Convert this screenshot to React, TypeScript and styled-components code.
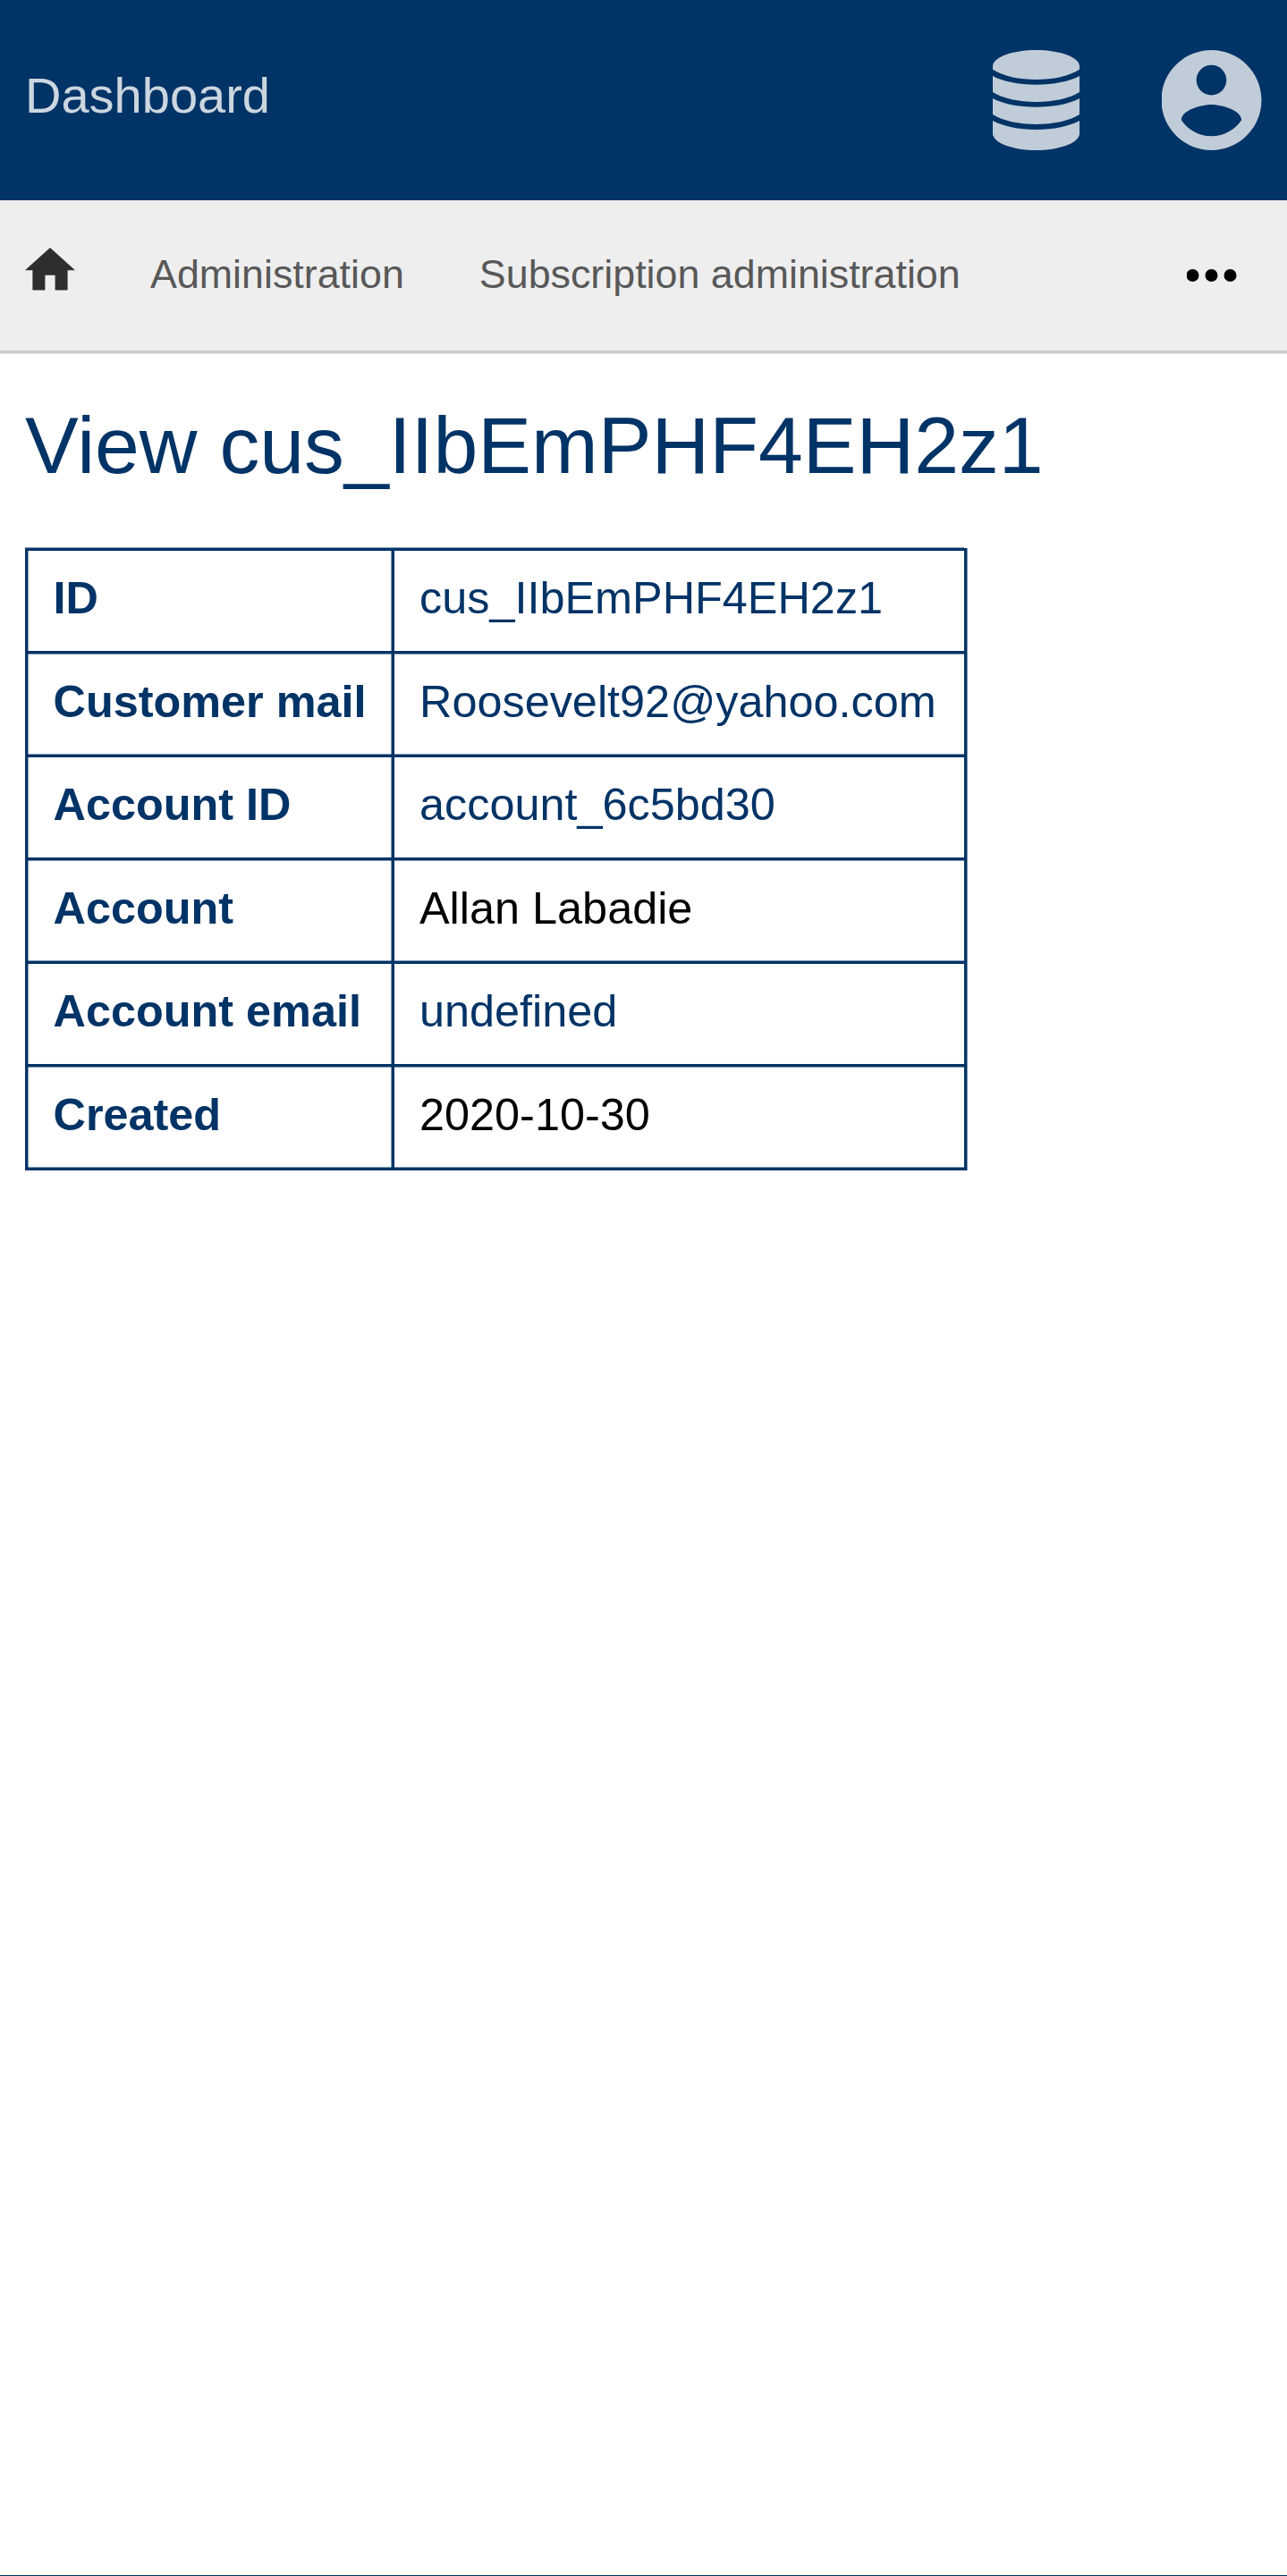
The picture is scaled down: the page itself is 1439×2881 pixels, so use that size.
import React from "react";
import styled, { createGlobalStyle } from "styled-components";

const navy = "#003366";
const navyFaint = "rgba(0, 51, 102, 0.5)";

const GlobalStyle = createGlobalStyle`
  * { box-sizing: border-box; }
  html, body { margin: 0; padding: 0; }
  body {
    background: #ffffff;
    font-family: "Liberation Sans", Arial, Helvetica, sans-serif;
    color: #000;
  }
  a { color: inherit; text-decoration: none; }
`;

const Page = styled.div`
  display: flex;
  flex-direction: column;
  min-height: 2881px;
  border-bottom: 1px solid ${navy};
`;

const Header = styled.header`
  display: flex;
  align-items: center;
  justify-content: space-between;
  height: 224px;
  padding: 0 28px;
  background: ${navy};
`;

const Brand = styled.a`
  font-size: 56px;
  line-height: 64px;
  margin-bottom: 10px;
  && { color: #ccd6e0; }
`;

const HeaderActions = styled.div`
  display: flex;
  align-items: center;
  gap: 84.5px;
  color: #c0ccd8;
`;

const IconButton = styled.a`
  display: flex;
  justify-content: center;
  width: 112px;
  height: 112px;
`;

const Nav = styled.nav`
  display: flex;
  align-items: center;
  height: 168px;
  padding: 0 56px 0 28px;
  background: #eeeeee;
`;

const NavRule = styled.div`
  height: 4px;
  background: #cccccc;
  border-bottom: 1px solid #e5e5e5;
`;

const HomeLink = styled.a`
  display: flex;
  margin: 0 84px 14px 0;
  color: #2e2e2e;
`;

const NavLink = styled.a`
  font-size: 44.8px;
  line-height: 52px;
  margin: 0 84px 4px 0;
  && { color: #585858; }
`;

const MoreButton = styled.a`
  display: flex;
  margin-left: auto;
  color: #000;
`;

const Content = styled.main`
  padding: 0 28px;
`;

const Title = styled.h1`
  margin: 50px 0 63px;
  font-size: 89.6px;
  line-height: 104px;
  font-weight: 400;
  color: ${navy};
`;

const Table = styled.table`
  width: 1053px;
  table-layout: fixed;
  border-collapse: separate;
  border-spacing: 0;
  border: solid ${navy};
  border-width: 0 3px 3px 0;
  box-shadow: 1px 0 0 ${navyFaint};
  font-size: 50.4px;
  line-height: 58px;
`;

const Row = styled.tr<{ $late: boolean }>`
  height: ${(p) => (p.$late ? 116 : 115)}px;

  & > * {
    padding: ${(p) => (p.$late ? 25 : 24)}px 0 0 28px;
    vertical-align: top;
    text-align: left;
    border: solid ${navy};
    border-width: 3px 0 0 3px;
  }
  & > th {
    width: 410px;
    padding-left: 28.5px;
    font-weight: 700;
    color: ${navy};
    box-shadow: inset 1px 0 0 ${navyFaint},
      ${(p) => (p.$late ? `inset 0 1px 0 ${navyFaint}` : `0 -1px 0 ${navyFaint}`)};
  }
  & > td {
    box-shadow: -1px 0 0 ${navyFaint},
      ${(p) => (p.$late ? `inset 0 1px 0 ${navyFaint}` : `0 -1px 0 ${navyFaint}`)};
  }
  &:last-child > th {
    box-shadow: inset 1px 0 0 ${navyFaint}, inset 0 1px 0 ${navyFaint},
      inset 0 -1px 0 ${navyFaint};
  }
  &:last-child > td {
    box-shadow: -1px 0 0 ${navyFaint}, inset 0 1px 0 ${navyFaint},
      inset 0 -1px 0 ${navyFaint};
  }
`;

const Value = styled.span<{ $link?: boolean }>`
  color: ${(p) => (p.$link ? navy : "#000")};
`;

const DatabaseIcon = () => (
  <svg width="97" height="112" viewBox="0 0 97 112" fill="currentColor">
    <path d="M0 18C0 8 22 0 48.5 0S97 8 97 18V21.7C86 29 67 33 48.5 33S11 29 0 21.7Z" />
    <path d="M0 29C11 35 29 38.7 48.5 38.7S86 35 97 29V47C86 54 68 58 48.5 58S11 54 0 47Z" />
    <path d="M0 54C11 60 29 63.8 48.5 63.8S86 60 97 54V72C86 79 68 83 48.5 83S11 79 0 72Z" />
    <path d="M0 79C11 85 29 89 48.5 89S86 85 97 79V94.5C95 104.5 74 112 48.5 112S2 104.5 0 94.5Z" />
  </svg>
);

const AccountIcon = () => (
  <svg width="112" height="112" viewBox="2.09 2 20 20" fill="currentColor">
    <path d="M12 2C6.48 2 2 6.48 2 12s4.48 10 10 10 10-4.48 10-10S17.52 2 12 2zm0 3c1.66 0 3 1.34 3 3s-1.34 3-3 3-3-1.34-3-3 1.34-3 3-3zm0 14.2c-2.5 0-4.71-1.28-6-3.22.03-1.99 4-3.08 6-3.08 1.99 0 5.97 1.09 6 3.08-1.29 1.94-3.5 3.22-6 3.22z" />
  </svg>
);

const HomeIcon = () => (
  <svg width="56" height="47.6" viewBox="2 3 20 17" fill="currentColor">
    <path d="M10 20v-6h4v6h5v-8h3L12 3 2 12h3v8z" />
  </svg>
);

const MoreIcon = () => (
  <svg width="56" height="14" viewBox="0.14 0 16 4" fill="currentColor">
    <circle cx="2" cy="2" r="2" />
    <circle cx="8" cy="2" r="2" />
    <circle cx="14" cy="2" r="2" />
  </svg>
);

const rows = [
  { label: "ID", value: "cus_IIbEmPHF4EH2z1", link: true },
  { label: "Customer mail", value: "Roosevelt92@yahoo.com", link: true },
  { label: "Account ID", value: "account_6c5bd30", link: true },
  { label: "Account", value: "Allan Labadie", link: false },
  { label: "Account email", value: "undefined", link: true },
  { label: "Created", value: "2020-10-30", link: false },
];

export default function App() {
  return (
    <>
      <GlobalStyle />
      <Page>
        <Header>
          <Brand href="#">Dashboard</Brand>
          <HeaderActions>
            <IconButton href="#" aria-label="Administration"><DatabaseIcon /></IconButton>
            <IconButton href="#" aria-label="Account"><AccountIcon /></IconButton>
          </HeaderActions>
        </Header>
        <Nav>
          <HomeLink href="#" aria-label="Home"><HomeIcon /></HomeLink>
          <NavLink href="#">Administration</NavLink>
          <NavLink href="#">Subscription administration</NavLink>
          <MoreButton href="#" aria-label="More"><MoreIcon /></MoreButton>
        </Nav>
        <NavRule />
        <Content>
          <Title>View cus_IIbEmPHF4EH2z1</Title>
          <Table>
            <tbody>
              {rows.map((row, i) => (
                <Row key={row.label} $late={i % 2 === 1}>
                  <th scope="row">{row.label}</th>
                  <td><Value $link={row.link}>{row.value}</Value></td>
                </Row>
              ))}
            </tbody>
          </Table>
        </Content>
      </Page>
    </>
  );
}
